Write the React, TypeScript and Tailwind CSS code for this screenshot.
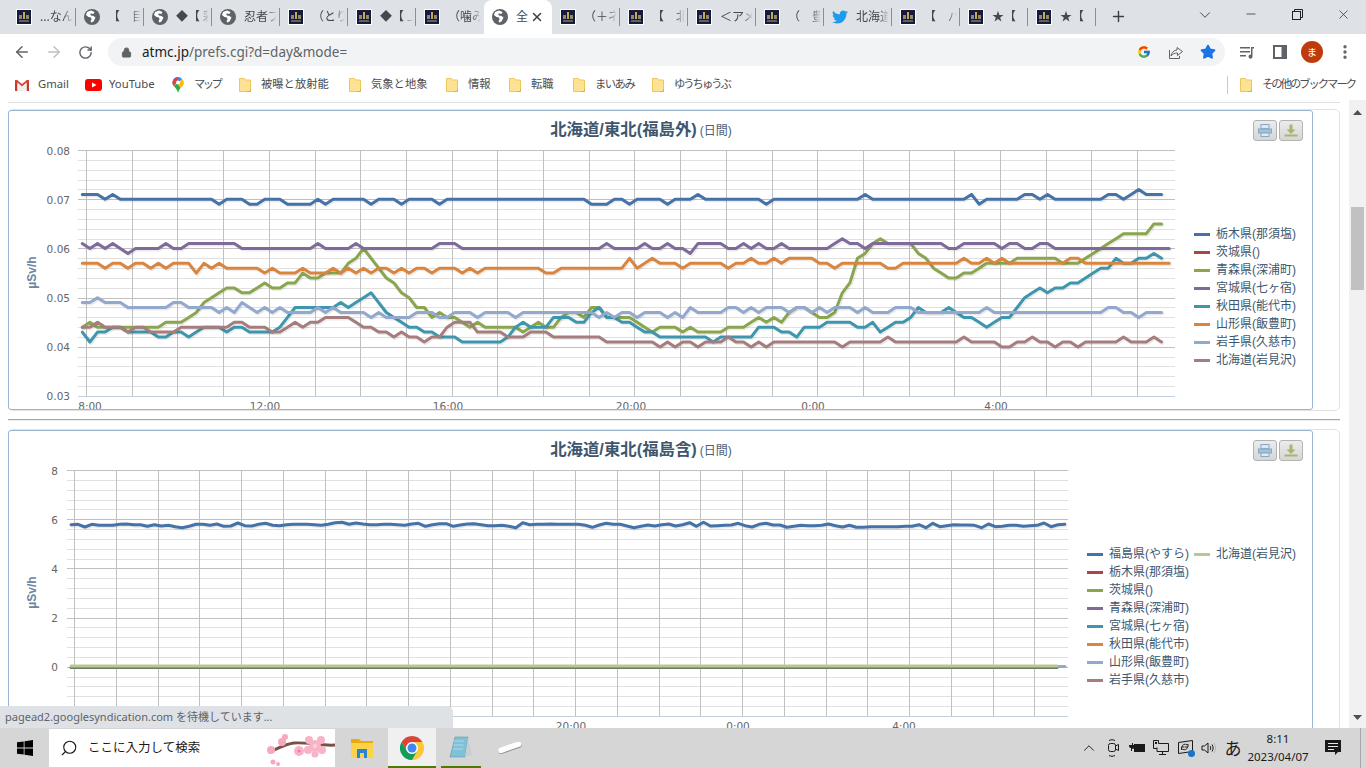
import { ArrowLeft, ArrowRight, ChevronDown, ChevronUp, EllipsisVertical, Lock, Minus, Plus, RotateCw, Search, Star, X } from 'lucide-react'
import { FaTwitter } from 'react-icons/fa'
import { FcGoogle } from 'react-icons/fc'

const UI_FONT = "font-['Noto_Sans','Noto_Sans_CJK_JP',sans-serif]"

const tabs = [
  { icon: 'site', title: '...なん' },
  { icon: 'globe', title: '【　目' },
  { icon: 'globe', title: '◆【 彩' },
  { icon: 'globe', title: '忍者ブ' },
  { icon: 'site', title: '（とり' },
  { icon: 'site', title: '◆【 上' },
  { icon: 'site', title: '（噛み' },
  { icon: 'globe', title: '全', active: true },
  { icon: 'site', title: '（＋ネ' },
  { icon: 'site', title: '【　北' },
  { icon: 'site', title: '＜アメ' },
  { icon: 'site', title: '（　豊' },
  { icon: 'twitter', title: '北海道' },
  { icon: 'site', title: '【　バ' },
  { icon: 'site', title: '★【' },
  { icon: 'site', title: '★【' },
]

const bookmarks = [
  { icon: 'gmail', label: 'Gmail', w: 'w-[71px]', t: '' },
  { icon: 'youtube', label: 'YouTube', w: 'w-[85px]', t: '' },
  { icon: 'maps', label: 'マップ', w: 'w-[67px]', t: 'tracking-[-2.5px]' },
  { icon: 'folder', label: '被曝と放射能', w: 'w-[110px]', t: '' },
  { icon: 'folder', label: '気象と地象', w: 'w-[97px]', t: '' },
  { icon: 'folder', label: '情報', w: 'w-[63px]', t: '' },
  { icon: 'folder', label: '転職', w: 'w-[64px]', t: '' },
  { icon: 'folder', label: 'まいあみ', w: 'w-[79px]', t: 'tracking-[-1.5px]' },
  { icon: 'folder', label: 'ゆうちゅうぶ', w: 'w-[100px]', t: 'tracking-[-2px]' },
]

// readings in 0.001 µSv/h, one point every 10 minutes
const tochigi = [
  71, 71, 71, 70, 71, 70, 70, 70, 70, 70, 70, 70, 70, 70, 70, 70, 70, 70, 69, 70,
  70, 70, 69, 69, 70, 70, 70, 69, 69, 69, 69, 70, 69, 70, 70, 70, 70, 70, 69, 70,
  70, 70, 69, 70, 70, 70, 70, 69, 70, 70, 70, 70, 70, 70, 70, 70, 70, 70, 70, 70,
  70, 70, 70, 70, 70, 70, 70, 69, 69, 69, 70, 70, 69, 70, 70, 70, 70, 69, 70, 70,
  70, 71, 70, 70, 70, 70, 70, 70, 70, 70, 69, 70, 70, 70, 70, 70, 70, 70, 70, 70,
  70, 70, 70, 71, 70, 70, 70, 70, 70, 70, 70, 70, 70, 70, 70, 70, 70, 71, 69, 70,
  70, 70, 70, 70, 71, 71, 70, 71, 70, 70, 70, 70, 70, 70, 70, 71, 71, 70, 71, 72,
  71, 71, 71,
]
const aomori = [
  44, 45, 44, 44, 44, 44, 44, 44, 44, 44, 44, 45, 45, 45, 46, 47, 49, 50, 51, 52,
  52, 51, 51, 52, 53, 52, 52, 53, 53, 55, 54, 54, 55, 55, 55, 57, 58, 60, 58, 56,
  54, 53, 51, 50, 48, 48, 46, 47, 46, 46, 45, 44, 45, 44, 44, 44, 44, 44, 43, 44,
  45, 44, 44, 46, 47, 47, 46, 48, 48, 46, 46, 46, 46, 45, 44, 43, 44, 44, 44, 43,
  44, 43, 43, 43, 43, 44, 44, 44, 45, 46, 45, 46, 45, 47, 48, 48, 47, 46, 46, 47,
  51, 53, 58, 59, 61, 62, 61, 61, 61, 61, 59, 58, 56, 55, 54, 54, 55, 55, 56, 57,
  57, 57, 57, 58, 58, 58, 58, 58, 58, 57, 57, 57, 58, 59, 60, 61, 62, 63, 63, 63,
  63, 65, 65,
]
const miyagi = [
  61, 60, 61, 60, 61, 60, 59, 60, 60, 60, 60, 61, 60, 60, 61, 61, 61, 61, 61, 61,
  61, 60, 60, 60, 60, 60, 60, 60, 60, 60, 60, 61, 60, 60, 60, 60, 61, 60, 60, 60,
  60, 60, 60, 60, 60, 60, 60, 61, 61, 61, 60, 60, 60, 60, 60, 60, 60, 60, 60, 60,
  60, 60, 60, 60, 60, 60, 60, 60, 60, 61, 60, 60, 60, 60, 61, 60, 60, 61, 60, 60,
  59, 61, 61, 61, 61, 60, 60, 61, 60, 61, 60, 60, 61, 60, 60, 60, 60, 60, 60, 61,
  62, 61, 61, 60, 61, 61, 61, 61, 61, 61, 61, 61, 61, 61, 60, 60, 61, 61, 61, 61,
  61, 60, 61, 61, 60, 60, 61, 61, 60, 60, 60, 60, 60, 60, 60, 60, 60, 60, 60, 60,
  60, 60, 60, 60,
]
const akita = [
  43, 41, 43, 43, 44, 44, 43, 43, 43, 43, 42, 42, 43, 43, 42, 43, 44, 44, 44, 43,
  44, 44, 43, 43, 43, 43, 44, 46, 48, 48, 48, 48, 48, 48, 49, 48, 49, 50, 51, 49,
  47, 46, 45, 44, 44, 43, 43, 42, 42, 42, 41, 41, 41, 41, 41, 41, 42, 44, 45, 44,
  44, 44, 46, 46, 46, 45, 45, 47, 48, 46, 46, 45, 45, 44, 43, 43, 42, 42, 42, 42,
  42, 42, 42, 41, 42, 42, 42, 42, 42, 44, 44, 44, 43, 43, 42, 44, 44, 44, 45, 45,
  45, 45, 44, 44, 45, 43, 44, 45, 45, 46, 48, 47, 47, 47, 48, 47, 46, 46, 45, 44,
  45, 46, 46, 48, 50, 51, 52, 51, 52, 52, 53, 53, 54, 55, 56, 56, 58, 57, 57, 58,
  58, 59, 58,
]
const yamagata = [
  57, 57, 57, 56, 57, 57, 56, 57, 57, 56, 57, 56, 57, 57, 57, 55, 57, 56, 57, 56,
  56, 56, 56, 56, 55, 56, 55, 55, 55, 56, 55, 55, 55, 56, 55, 56, 55, 56, 55, 56,
  56, 55, 56, 55, 56, 56, 55, 56, 56, 56, 55, 56, 55, 56, 56, 56, 56, 56, 56, 56,
  56, 55, 55, 56, 56, 56, 56, 56, 56, 56, 56, 56, 58, 56, 57, 58, 57, 57, 57, 56,
  57, 57, 57, 57, 57, 56, 57, 57, 58, 57, 57, 58, 57, 58, 58, 58, 58, 57, 57, 56,
  57, 57, 57, 57, 57, 57, 56, 56, 57, 57, 57, 57, 57, 57, 57, 57, 58, 57, 57, 58,
  57, 58, 57, 57, 57, 57, 57, 57, 57, 57, 58, 58, 57, 57, 57, 57, 57, 57, 57, 57,
  57, 57, 57, 57,
]
const iwate = [
  49, 49, 50, 49, 49, 49, 48, 48, 48, 48, 48, 48, 49, 49, 48, 48, 48, 48, 47, 48,
  47, 49, 48, 47, 48, 47, 48, 47, 47, 47, 47, 48, 47, 48, 47, 47, 47, 47, 46, 47,
  46, 46, 46, 46, 47, 47, 47, 46, 46, 47, 47, 47, 46, 47, 47, 47, 47, 46, 47, 47,
  47, 47, 47, 47, 47, 47, 47, 47, 46, 47, 46, 47, 47, 46, 47, 47, 47, 46, 47, 46,
  48, 47, 47, 47, 47, 48, 48, 47, 48, 47, 48, 48, 48, 47, 48, 48, 47, 48, 47, 48,
  48, 48, 47, 48, 47, 47, 47, 48, 48, 48, 47, 47, 47, 47, 47, 47, 47, 47, 47, 48,
  47, 47, 47, 47, 47, 47, 47, 47, 47, 47, 47, 47, 47, 47, 47, 48, 48, 47, 47, 46,
  47, 47, 47,
]
const hokkaido = [
  44, 44, 45, 44, 44, 44, 43, 44, 44, 43, 43, 43, 43, 44, 44, 44, 44, 44, 44, 44,
  45, 45, 44, 44, 44, 43, 43, 44, 45, 44, 45, 45, 46, 46, 46, 46, 45, 44, 44, 43,
  43, 42, 43, 42, 42, 41, 42, 42, 44, 45, 45, 45, 43, 43, 43, 43, 42, 42, 42, 43,
  43, 43, 42, 42, 42, 42, 42, 42, 42, 41, 41, 41, 41, 41, 41, 41, 40, 41, 40, 41,
  41, 40, 41, 41, 41, 42, 41, 41, 40, 41, 40, 41, 41, 41, 41, 41, 41, 41, 41, 41,
  40, 41, 41, 41, 41, 41, 42, 41, 41, 41, 41, 41, 41, 41, 41, 41, 42, 41, 41, 41,
  41, 40, 40, 41, 41, 42, 41, 41, 40, 41, 41, 40, 41, 41, 41, 41, 41, 42, 41, 41,
  41, 42, 41,
]
// second chart, plotted height of the Fukushima line (in thirds of a pixel)
const fukushima = [
  38, 37, 45, 37, 40, 40, 40, 37, 36, 38, 38, 43, 38, 42, 40, 44, 47, 43, 37, 37,
  40, 36, 43, 42, 33, 41, 42, 37, 34, 40, 41, 38, 37, 37, 37, 38, 40, 37, 32, 31,
  37, 33, 36, 38, 38, 37, 37, 38, 40, 36, 34, 43, 38, 35, 35, 43, 39, 36, 35, 38,
  41, 41, 40, 43, 47, 32, 38, 37, 37, 36, 37, 37, 37, 37, 40, 46, 39, 34, 37, 37,
  42, 47, 43, 39, 42, 38, 36, 42, 38, 32, 43, 31, 42, 41, 40, 39, 34, 41, 45, 37,
  34, 39, 39, 46, 43, 40, 41, 41, 40, 36, 41, 45, 40, 46, 46, 44, 44, 44, 44, 44,
  43, 43, 38, 47, 34, 44, 41, 38, 39, 39, 40, 47, 36, 44, 43, 40, 40, 43, 41, 40,
  33, 44, 38, 37,
]

const toPath = (ys: number[], x0: number, dx: number) =>
  ys.map((y, i) => `${i === 0 ? 'M' : 'L'}${(x0 + dx * i).toFixed(1)} ${y.toFixed(1)}`).join(' ')

const series1 = [
  { color: '#4572a7', data: tochigi },
  { color: '#89a54e', data: aomori },
  { color: '#80699b', data: miyagi },
  { color: '#3d96ae', data: akita },
  { color: '#db843d', data: yamagata },
  { color: '#92a8cd', data: iwate },
  { color: '#a47d7c', data: hokkaido },
]

const legend1 = [
  ['#4572a7', '栃木県(那須塩)'],
  ['#aa4643', '茨城県()'],
  ['#89a54e', '青森県(深浦町)'],
  ['#80699b', '宮城県(七ヶ宿)'],
  ['#3d96ae', '秋田県(能代市)'],
  ['#db843d', '山形県(飯豊町)'],
  ['#92a8cd', '岩手県(久慈市)'],
  ['#a47d7c', '北海道(岩見沢)'],
]

const legend2 = [
  ['#4572a7', '福島県(やすら)'],
  ['#aa4643', '栃木県(那須塩)'],
  ['#89a54e', '茨城県()'],
  ['#80699b', '青森県(深浦町)'],
  ['#3d96ae', '宮城県(七ヶ宿)'],
  ['#db843d', '秋田県(能代市)'],
  ['#92a8cd', '山形県(飯豊町)'],
  ['#a47d7c', '岩手県(久慈市)'],
  ['#b5ca92', '北海道(岩見沢)'],
]

const minorYs = Array.from({ length: 26 }, (_, k) => Math.floor(150.5 + k * 9.84) + 0.5)

function Grid({ left, right, x0, dx, count }: { left: number; right: number; x0: number; dx: number; count: number }) {
  return (
    <g shapeRendering="crispEdges" strokeWidth="1">
      {minorYs.map((y, k) =>
        k % 5 === 0 ? null : <line key={y} x1={left} x2={right} y1={y} y2={y} stroke="#e0e0e0" />,
      )}
      {Array.from({ length: count }, (_, n) => {
        const x = Math.floor(x0 + dx * n) + 0.5
        return <line key={n} x1={x} x2={x} y1={150.5} y2={396} stroke="#c0c0c0" />
      })}
      {minorYs.map((y, k) =>
        k % 5 === 0 && k < 25 ? <line key={y} x1={left} x2={right} y1={y} y2={y} stroke="#c0c0c0" /> : null,
      )}
      <line x1={left} x2={right} y1={396.5} y2={396.5} stroke="#c0d0e0" />
    </g>
  )
}

function AxisLabels({ labels, labelX, step, xLabels }: { labels: string[]; labelX: number; step: number; xLabels: [string, number][] }) {
  return (
    <g fontFamily="'DejaVu Sans', sans-serif" fontSize="10.5" fill="#666666">
      {labels.map((t, i) => (
        <text key={t} x={labelX} y={154.5 + i * step} textAnchor="end">
          {t}
        </text>
      ))}
      {xLabels.map(([t, x]) => (
        <text key={t} x={x} y={410} textAnchor="middle">
          {t}
        </text>
      ))}
      <text
        transform="translate(37 272.5) rotate(-90)"
        textAnchor="middle"
        fontFamily="'Liberation Sans', sans-serif"
        fontSize="12"
        fontWeight="700"
        fill="#6d869f"
      >
        µSv/h
      </text>
    </g>
  )
}

function PlotOne() {
  const xs: [string, number][] = [['8:00', 91], ['12:00', 266], ['16:00', 449], ['20:00', 632], ['0:00', 814], ['4:00', 997]]
  return (
    <svg width="1180" height="267" viewBox="10 143 1180 267" className="block shrink-0">
      <Grid left={79} right={1176} x0={87.5} dx={45.7} count={24} />
      <AxisLabels labels={['0.08', '0.07', '0.06', '0.05', '0.04', '0.03']} labelX={71} step={49.12} xLabels={xs} />
      {series1.map((s) => {
        const d = toPath(s.data.map((v) => 199.3 + (70 - v) * 4.92), 83.3, 7.6)
        return (
          <g key={s.color} fill="none" strokeLinejoin="round" strokeLinecap="round">
            <path d={d} stroke="#000" strokeOpacity="0.08" strokeWidth="4" transform="translate(1 1)" />
            <path d={d} stroke={s.color} strokeWidth="3" />
          </g>
        )
      })}
    </svg>
  )
}

function PlotTwo() {
  // the 8:00 to 16:00 labels sit behind the status bubble
  const xs: [string, number][] = [['20:00', 572], ['0:00', 739], ['4:00', 905]]
  const d = toPath(fukushima.map((z) => 192 + z / 3), 72, 6.95)
  return (
    <svg width="1070" height="267" viewBox="10 143 1070 267" className="block shrink-0">
      <Grid left={68} right={1069} x0={75.5} dx={41.75} count={24} />
      <AxisLabels labels={['8', '6', '4', '2', '0']} labelX={59} step={49.12} xLabels={xs} />
      <g fill="none" strokeLinejoin="round" strokeLinecap="round">
        <path d={d} stroke="#000" strokeOpacity="0.08" strokeWidth="4" transform="translate(1 1)" />
        <path d={d} stroke="#4572a7" strokeWidth="3" />
        <path d="M1058 346.5 H1066" stroke="#92a8cd" strokeWidth="3" />
        <path d="M72 347.5 H1058" stroke="#6f7a66" strokeWidth="3" />
        <path d="M72 346 H1058" stroke="#b5ca92" strokeWidth="3" />
      </g>
    </svg>
  )
}

function ChartButtons() {
  return (
    <div className="flex gap-[2px] mt-[9px] mr-[9px]">
      <div className="w-6 h-[21px] rounded-[3px] border border-[#b3b3b3] bg-gradient-to-b from-[#ececec] to-[#d6d6d6] flex items-center justify-center">
        <svg width="14" height="13" viewBox="0 0 14 13">
          <rect x="3" y="0.5" width="8" height="4" fill="#dfe8f2" stroke="#8aa8c8" />
          <rect x="0.5" y="5" width="13" height="4" fill="#a6bfd8" stroke="#8aa8c8" />
          <rect x="3" y="9" width="8" height="3.5" fill="#dfe8f2" stroke="#8aa8c8" />
        </svg>
      </div>
      <div className="w-6 h-[21px] rounded-[3px] border border-[#b3b3b3] bg-gradient-to-b from-[#ececec] to-[#d6d6d6] flex items-center justify-center">
        <svg width="14" height="13" viewBox="0 0 14 13">
          <path d="M5.5 0.5h3v5h3l-4.500 4.500l-4.500 -4.500h3z" fill="#a9b56f" />
          <rect x="0.5" y="10.500" width="13" height="2" fill="#a9b56f" />
        </svg>
      </div>
    </div>
  )
}

function LegendItem({ color, label }: { color: string; label: string }) {
  return (
    <div className="flex items-center h-[18px]">
      <span className="w-4 h-[3px] shrink-0" style={{ backgroundColor: color }} />
      <span className="ml-[6px] text-[12px] leading-none text-[#3e576f] whitespace-nowrap">{label}</span>
    </div>
  )
}

function ChartCard({ title, children }: { title: string; children: React.ReactNode }) {
  return (
    <div className="mx-2 w-[1332px] h-[302px] border border-[#e2e2e2] rounded-[5px] pr-[26px]">
      <div className="h-[300px] border border-[#9db4d4] rounded-[3px] -ml-px overflow-hidden font-['Liberation_Sans','Noto_Sans_CJK_JP',sans-serif]">
        <div className="flex h-[32px]">
          <div className="flex-1 pl-[20px] flex items-center justify-center gap-[3px] pt-[5px]">
            <span className="text-[16.4px] font-bold text-[#3e576f] whitespace-nowrap">{title}</span>
            <span className="text-[12px] text-[#4d6279] whitespace-nowrap pt-[2px]">(日間)</span>
          </div>
          <ChartButtons />
        </div>
        {children}
      </div>
    </div>
  )
}

function Page() {
  return (
    <div className="relative flex h-[628px] bg-white overflow-hidden">
      <div className="w-[1349px] shrink-0">
        <div className="ml-2 w-[1332px] h-px mt-[2px] mb-[6px] bg-[#e2e2e2]" />
        <ChartCard title="北海道/東北(福島外)">
          <div className="flex">
            <PlotOne />
            <div className="ml-[5px] pt-[82px]">
              {legend1.map(([c, t]) => (
                <LegendItem key={t} color={c} label={t} />
              ))}
            </div>
          </div>
        </ChartCard>
        <div className="ml-2 w-[1332px] mt-[8px] mb-[8px] h-[2px] border-t border-[#a9a9a9] border-b-[#ececec] border-b" />
        <ChartCard title="北海道/東北(福島含)">
          <div className="flex">
            <PlotTwo />
            <div className="ml-[8px] pt-[82px] grid grid-flow-col grid-rows-[repeat(8,18px)] auto-cols-[107px]">
              {legend2.map(([c, t]) => (
                <LegendItem key={t} color={c} label={t} />
              ))}
            </div>
          </div>
        </ChartCard>
      </div>
      <div className="w-[17px] bg-[#f1f1f1] flex flex-col items-center">
        <svg width="9" height="5" viewBox="0 0 9 5" className="mt-[10px]">
          <path d="M4.500 0L9 5H0z" fill="#505050" />
        </svg>
        <div className="w-[13px] h-[83px] mt-[92px] bg-[#c1c1c1]" />
        <svg width="9" height="5" viewBox="0 0 9 5" className="mt-[425px]">
          <path d="M0 0H9L4.500 5z" fill="#505050" />
        </svg>
      </div>
      {/* status bubble */}
      <div className={`absolute left-0 bottom-0 w-[453px] h-[22px] bg-[#dee1e6] rounded-tr-[6px] pl-[5px] flex items-center text-[11px] text-[#5f6368] ${UI_FONT}`}>
        pagead2.googlesyndication.com を待機しています...
      </div>
    </div>
  )
}

function SiteIcon() {
  return (
    <svg width="16" height="16" viewBox="0 0 16 16" className="shrink-0">
      <rect width="16" height="16" fill="#fff" />
      <rect x="1" y="1" width="14" height="14" fill="#171a3a" />
      <rect x="7" y="3" width="2" height="7" fill="#c9a94e" />
      <rect x="3" y="6" width="3" height="4" fill="#8f8a72" />
      <rect x="10" y="6" width="3" height="4" fill="#8f8a72" />
      <rect x="3" y="11" width="10" height="2" fill="#5d6069" />
    </svg>
  )
}

function GlobeIcon() {
  return (
    <svg width="16" height="16" viewBox="0 0 16 16" className="shrink-0">
      <circle cx="8" cy="8" r="8" fill="#5f6368" />
      <path d="M7 1.500L3 3l-1 3 2.500 2 2.500.5.500 2-1 1.500 1 1.500 2-1 1-2 1-2-2-1.500-2.500-.5-1-1.500 1.500-.5 2 .5 1-2z" fill="#fff" />
    </svg>
  )
}

function TabStrip() {
  return (
    <div className="flex h-[34px] bg-[#dee1e6] pl-2">
      {tabs.map((tab, i) => (
        <div
          key={i}
          className={`relative w-[68px] shrink-0 h-[34px] flex items-center pl-2 ${tab.active ? 'bg-white rounded-t-[8px]' : ''}`}
        >
          {tab.icon === 'site' && <SiteIcon />}
          {tab.icon === 'globe' && <GlobeIcon />}
          {tab.icon === 'twitter' && <FaTwitter className="w-4 h-4 shrink-0 text-[#1d9bf0]" />}
          <span
            className={`ml-2 text-[12px] whitespace-nowrap overflow-hidden text-[#45494f] ${tab.active ? 'w-[12px]' : 'w-[33px] [mask-image:linear-gradient(to_right,black_70%,transparent)]'}`}
          >
            {tab.title}
          </span>
          {tab.active && <X className="ml-[2px] w-[14px] h-[14px] text-[#3c4043]" strokeWidth={2.5} />}
          {!tab.active && i !== 6 && (
            <span className="absolute right-0 top-[8px] h-[18px] w-px bg-[#8a8d91]" />
          )}
        </div>
      ))}
      <div className="ml-[12px] mt-[6px] h-5 w-5 flex items-center justify-center">
        <Plus className="w-[17px] h-[17px] text-[#3c4043]" strokeWidth={2} />
      </div>
      <div className="ml-auto flex items-start">
        <ChevronDown className="mt-[6px] mr-[14px] w-[18px] h-[18px] text-[#3c4043]" strokeWidth={1.25} />
        <div className="w-[46px] h-[28px] flex items-center justify-center">
          <Minus className="w-[14px] h-[14px] text-[#202124]" strokeWidth={1.25} />
        </div>
        <div className="w-[46px] h-[28px] flex items-center justify-center">
          <svg width="11" height="11" viewBox="0 0 11 11" fill="none" stroke="#202124">
            <path d="M2.500 2.500V.5h8v8h-2" />
            <rect x=".5" y="2.500" width="8" height="8" />
          </svg>
        </div>
        <div className="w-[46px] h-[28px] flex items-center justify-center">
          <X className="w-[15px] h-[15px] text-[#202124]" strokeWidth={1.1} />
        </div>
      </div>
    </div>
  )
}

function Toolbar() {
  return (
    <div className="flex items-center h-[33px] bg-white pt-[3px]">
      <div className="w-[108px] shrink-0 flex items-center text-[#5f6368]">
        <ArrowLeft className="ml-[13px] w-[18px] h-[18px]" strokeWidth={2} />
        <ArrowRight className="ml-[14px] w-[18px] h-[18px] text-[#bdc1c6]" strokeWidth={2} />
        <RotateCw className="ml-[15px] w-[15px] h-[15px]" strokeWidth={2.25} />
      </div>
      <div className="w-[1117px] h-7 rounded-full bg-[#f1f3f4] flex items-center pl-[13px]">
        <Lock className="w-[11px] h-[11px] text-[#5f6368] fill-[#5f6368]" strokeWidth={2} />
        <span className="ml-[10px] text-[13.5px] text-[#5f6368] whitespace-nowrap">
          <span className="text-[#202124]">atmc.jp</span>/prefs.cgi?d=day&amp;mode=
        </span>
        <FcGoogle className="ml-auto w-[14px] h-[14px]" />
        <svg width="16" height="16" viewBox="0 0 16 16" fill="none" stroke="#5f6368" className="ml-[17px]">
          <path d="M9 3.500l5.500 4-5 4V9C6.500 9 4.500 10 3 12c.500-3.500 2.500-5.500 6-6z" strokeLinejoin="round" />
          <path d="M1.500 6v8.500h10V12" />
        </svg>
        <Star className="ml-4 mr-[9px] w-4 h-4 text-[#1a73e8] fill-[#1a73e8]" />
      </div>
      <svg width="16" height="16" viewBox="0 0 16 16" className="ml-[14px]" fill="#5f6368">
        <path d="M1 3h10v1.500H1zM1 7h10v1.500H1zM1 11h6v1.500H1z" />
        <path d="M12 3h3v1.500h-1.500v8A2 2 0 1 1 12 10.700z" />
      </svg>
      <svg width="16" height="16" viewBox="0 0 16 16" className="ml-[17px]">
        <rect x="1" y="1" width="14" height="14" fill="#5f6368" />
        <rect x="3" y="3" width="6.500" height="10" fill="#fff" />
      </svg>
      <div className="ml-[13px] w-[22px] h-[22px] rounded-full bg-[#bf3b0b] text-white text-[10px] flex items-center justify-center">
        ま
      </div>
      <EllipsisVertical className="ml-[13px] w-[18px] h-[18px] text-[#5f6368]" strokeWidth={2.5} />
    </div>
  )
}

function FolderIcon() {
  return (
    <svg width="12" height="14" viewBox="0 0 12 14" className="shrink-0 ml-[2px] mr-[2px]">
      <path d="M.5.500h5l1 1.500h5v11.500H.5z" fill="#fde293" stroke="#eec660" />
      <path d="M8 13.500h3.500V11" fill="none" stroke="#e0b040" />
    </svg>
  )
}

function BookmarkIcon({ name }: { name: string }) {
  if (name === 'gmail')
    return (
      <svg width="16" height="16" viewBox="0 0 16 16" className="shrink-0">
        <path d="M1 3h2.500v11H1zM12.500 3H15v11h-2.500z" fill="#c5392f" />
        <path d="M1 3h2l5 4 5-4h2v1.500L8 10 1 4.500z" fill="#d44638" />
        <path d="M3.500 5.500L8 9.500l4.500-4V14h-9z" fill="#f0f0f0" />
      </svg>
    )
  if (name === 'youtube')
    return (
      <svg width="17" height="16" viewBox="0 0 17 16" className="shrink-0">
        <rect y="2" width="17" height="12" rx="3" fill="#ff0000" />
        <path d="M7 5.500L11.500 8 7 10.500z" fill="#fff" />
      </svg>
    )
  if (name === 'maps')
    return (
      <svg width="16" height="16" viewBox="0 0 16 16" className="shrink-0">
        <path d="M8 0a5.500 5.500 0 0 0-4.200 9L8 4z" fill="#1a73e8" />
        <path d="M8 0a5.500 5.500 0 0 1 4.200 2L8 6z" fill="#4285f4" />
        <path d="M3.800 9c1.700 2 3.400 3.800 4.200 7 .500-2 1.400-3.500 2.500-5L8 5.500z" fill="#34a853" />
        <path d="M12.200 2a5.500 5.500 0 0 1-1.700 9L8 7.500z" fill="#fbbc04" />
        <path d="M3.800 2.200L8 0v4l-4.200 5a5.500 5.500 0 0 1 0-6.800z" fill="#ea4335" />
        <circle cx="8" cy="5.500" r="2" fill="#fff" />
      </svg>
    )
  return <FolderIcon />
}

function BookmarkBar() {
  return (
    <div className="flex items-center h-[33px] bg-white pl-[14px] pt-[2px] text-[11.3px] text-[#4a4d52]">
      {bookmarks.map((b) => (
        <div key={b.label} className={`flex items-center shrink-0 ${b.w}`}>
          <span className="w-4 flex justify-center">
            <BookmarkIcon name={b.icon} />
          </span>
          <span className={`ml-2 whitespace-nowrap ${b.t}`}>{b.label}</span>
        </div>
      ))}
      <div className="ml-auto flex items-center">
        <span className="w-px h-[18px] bg-[#c6c8cb] mr-[10px]" />
        <FolderIcon />
        <span className="ml-2 mr-[11px] whitespace-nowrap tracking-[-2px]">その他のブックマーク</span>
      </div>
    </div>
  )
}

function Blossom() {
  return (
    <svg width="74" height="38" viewBox="0 0 74 38" className="shrink-0">
      <path d="M8 23C16 20 24 15 33 14 46 13 60 17 74 16" fill="none" stroke="#7a5148" strokeWidth="3" />
      <g fill="#f7a8bd">
        <circle cx="10" cy="21" r="4" />
        <circle cx="21" cy="13" r="4" />
        <circle cx="24" cy="8" r="3" />
        <circle cx="12" cy="33" r="2.500" />
        <circle cx="17" cy="35" r="2" />
      </g>
      <g fill="#f9b3c6">
        <circle cx="38" cy="22" r="5" />
        <circle cx="54" cy="17" r="6" />
        <circle cx="48" cy="11" r="4" />
        <circle cx="60" cy="11" r="4" />
        <circle cx="47" cy="21" r="4" />
        <circle cx="61" cy="21" r="4" />
        <circle cx="54" cy="25" r="3.500" />
      </g>
      <circle cx="54" cy="17" r="2" fill="#f6d3e0" />
      <circle cx="38" cy="22" r="1.500" fill="#e77d9c" />
    </svg>
  )
}

function Taskbar() {
  return (
    <div className={`flex h-10 bg-[#d6d6d6] text-[#1a1a1a] ${UI_FONT}`}>
      <div className="w-[49px] shrink-0 flex items-center justify-center">
        <svg width="16" height="16" viewBox="0 0 16 16" fill="#000">
          <path d="M0 2.300l6.700-.9v6.200H0zM7.500 1.300L16 0v7.600H7.500zM0 8.400h6.700v6.200L0 13.700zM7.500 8.400H16V16l-8.500-1.200z" />
        </svg>
      </div>
      <div className="w-[286px] h-[38px] mt-px bg-white flex items-center pl-[11px] overflow-hidden">
        <Search className="w-[18px] h-[18px] -scale-x-100" strokeWidth={1.5} />
        <span className="ml-[10px] text-[12.5px] whitespace-nowrap">ここに入力して検索</span>
        <span className="ml-auto">
          <Blossom />
        </span>
      </div>
      <div className="w-[53px] shrink-0 flex items-center justify-center">
        <svg width="22" height="20" viewBox="0 0 22 20">
          <path d="M0 1h8l2 2h12v4H0z" fill="#e9a90f" />
          <path d="M0 5h22v15H0z" fill="#fbd349" />
          <path d="M6 11h10v9h-3v-5H9v5H6z" fill="#2a84d2" />
        </svg>
      </div>
      <div className="relative w-[48px] shrink-0 bg-[#f0f0f0] flex items-center justify-center">
        <svg width="24" height="24" viewBox="0 0 24 24">
          <path d="M12 0A12 12 0 0 0 1.600 6L6.800 15A6 6 0 0 1 12 6H22.400A12 12 0 0 0 12 0" fill="#db4437" />
          <path d="M22.400 6H12A6 6 0 0 1 17.200 15L12 24A12 12 0 0 0 22.400 6" fill="#fcc934" />
          <path d="M1.600 6A12 12 0 0 0 12 24L17.200 15A6 6 0 0 1 6.800 15Z" fill="#0f9d58" />
          <circle cx="12" cy="12" r="5.500" fill="#fff" />
          <circle cx="12" cy="12" r="4.500" fill="#4285f4" />
        </svg>
        <span className="absolute left-0 right-0 bottom-0 h-[2px] bg-[#4a7c00]" />
      </div>
      <div className="relative ml-[5px] w-[40px] shrink-0 flex items-center justify-center">
        <svg width="24" height="26" viewBox="0 0 24 26">
          <path d="M6 2h13l-3 20H1z" fill="#7fc2d6" stroke="#5f8c9a" strokeWidth="0.500" />
          <path d="M19 2l4 18-7 2z" fill="#c9ced1" />
          <path d="M5 6h10M4.500 10h10M4 14h10" stroke="#a7dbe8" />
        </svg>
        <span className="absolute left-0 right-0 bottom-0 h-[2px] bg-[#4a7c00]" />
      </div>
      <div className="ml-[10px] w-[38px] shrink-0 flex items-center justify-center">
        <svg width="26" height="12" viewBox="0 0 26 12">
          <rect x="1" y="3.500" width="24" height="5.500" rx="2.700" transform="rotate(-19 13 6)" fill="#8f8f8f" />
          <rect x="1" y="2.500" width="24" height="5.500" rx="2.700" transform="rotate(-19 13 6)" fill="#fff" />
        </svg>
      </div>
      <div className="ml-auto flex items-center">
        <div className="w-6 flex justify-center">
          <ChevronUp className="w-[18px] h-[18px]" strokeWidth={1.25} />
        </div>
        <div className="w-6 flex justify-center">
          <svg width="12" height="18" viewBox="0 0 12 18" fill="none" stroke="#1a1a1a">
            <rect x="1.500" y="4.500" width="7" height="8" rx="2" />
            <path d="M8.500 7l3-1.500v6l-3-1.500M2 1.500c2-1 4-1 6 0M2 16.500c2 1 4 1 6 0" />
          </svg>
        </div>
        <div className="w-6 flex justify-center">
          <svg width="16" height="12" viewBox="0 0 16 12" fill="#1a1a1a">
            <rect x="5" y="2" width="11" height="8" />
            <path d="M0 3h3V1h1v2h1v3a1 1 0 0 1-2 0v3H2V6a2 2 0 0 1-2-2z" />
          </svg>
        </div>
        <div className="w-6 flex justify-center">
          <svg width="16" height="16" viewBox="0 0 16 16" fill="none" stroke="#1a1a1a">
            <path d="M5.500 3.500V.5H.5v8H4M5.500 3.500h10v8H4V7.500M9.500 11.500v3M6 14.500h7" />
            <rect x="2" y="2" width="2" height="2" fill="#1a1a1a" stroke="none" />
          </svg>
        </div>
        <div className="relative w-6 flex justify-center">
          <svg width="16" height="16" viewBox="0 0 16 16" fill="none" stroke="#1a1a1a">
            <path d="M1.500 2.500l14-2v11l-14 2z" />
            <path d="M5 7a3 3 0 0 1 5-2l1-1v3H8M10.500 7a3 3 0 0 1-5 2l-1 1V7h3" strokeWidth="0.900" />
          </svg>
          <span className="absolute left-[15px] top-[10px] w-[7px] h-[7px] rounded-full bg-[#1a73c8]" />
        </div>
        <div className="w-6 flex justify-center">
          <svg width="16" height="14" viewBox="0 0 16 14" fill="none" stroke="#1a1a1a">
            <path d="M1 5h2.500L7 2v10L3.500 9H1z" />
            <path d="M9 5c1 1 1 3 0 4M11 3.500c1.500 2 1.500 5 0 7" />
            <path d="M13 2c2 3 2 7 0 10" stroke="#b5b5b5" />
          </svg>
        </div>
        <div className="w-6 flex justify-center text-[17px] leading-none">あ</div>
        <div className="w-[66px] flex flex-col items-center text-[11.5px] leading-[18px]">
          <span>8:11</span>
          <span className="whitespace-nowrap">2023/04/07</span>
        </div>
        <div className="w-[44px] flex justify-center">
          <svg width="16" height="16" viewBox="0 0 16 16" fill="#1a1a1a">
            <path d="M0 0h16v12h-3l-3 3v-3H0z" />
            <path d="M3 3h10v1H3zM3 6h10v1H3zM3 9h6v1H3z" fill="#e8e8e8" />
          </svg>
        </div>
        <div className="w-[6px] h-10 ml-[5px] mr-0 border-l border-[#a8a8a8]" />
      </div>
    </div>
  )
}

export default function App() {
  return (
    <div className={`w-[1366px] h-[768px] overflow-hidden bg-white ${UI_FONT}`}>
      <TabStrip />
      <Toolbar />
      <BookmarkBar />
      <Page />
      <Taskbar />
    </div>
  )
}
